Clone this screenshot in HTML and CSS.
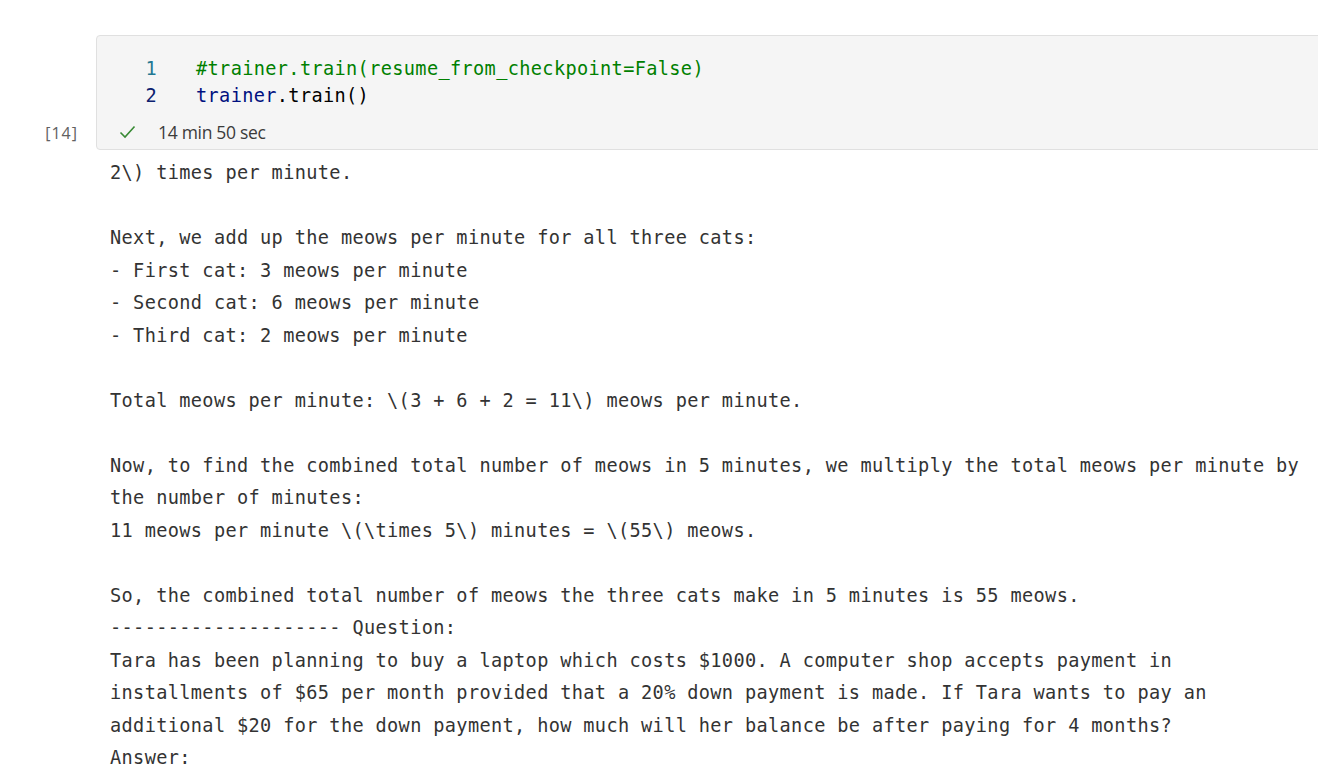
FILE: index.html
```html
<!DOCTYPE html>
<html>
<head>
<meta charset="utf-8">
<link rel="stylesheet" href="styles.css">
</head>
<body>
<div class="cell">
  <div class="gutter"><span class="exec-count">[14]</span></div>
  <div class="code-box">
    <div class="code">
      <div class="line"><span class="ln ln-inactive">1</span><span class="c-comment">#trainer.train(resume_from_checkpoint=False)</span></div>
      <div class="line"><span class="ln ln-active">2</span><span class="c-var">trainer</span><span class="c-plain">.train()</span></div>
    </div>
    <div class="status">
      <svg class="check" width="17" height="14" viewBox="0 0 17 14"><path d="M1.5 7.5 L6 12 L15.5 1.5" fill="none" stroke="#388a34" stroke-width="1.6"/></svg>
      <span class="duration">14 min 50 sec</span>
    </div>
  </div>
</div>
<pre class="output">2\) times per minute.

Next, we add up the meows per minute for all three cats:
- First cat: 3 meows per minute
- Second cat: 6 meows per minute
- Third cat: 2 meows per minute

Total meows per minute: \(3 + 6 + 2 = 11\) meows per minute.

Now, to find the combined total number of meows in 5 minutes, we multiply the total meows per minute by
the number of minutes:
11 meows per minute \(\times 5\) minutes = \(55\) meows.

So, the combined total number of meows the three cats make in 5 minutes is 55 meows.
-------------------- Question:
Tara has been planning to buy a laptop which costs $1000. A computer shop accepts payment in
installments of $65 per month provided that a 20% down payment is made. If Tara wants to pay an
additional $20 for the down payment, how much will her balance be after paying for 4 months?
Answer:</pre>
</body>
</html>
```
FILE: styles.css
```css
html, body {
  margin: 0;
  padding: 0;
  background: #ffffff;
  overflow: hidden;
}
.cell {
  display: flex;
  margin-top: 35px;
}
.gutter {
  width: 96px;
  flex: none;
  display: flex;
  align-items: flex-end;
  justify-content: flex-end;
  padding-right: 18px;
  box-sizing: border-box;
  padding-bottom: 6px;
}
.exec-count {
  font-family: "Open Sans", "Noto Sans", sans-serif;
  font-size: 16px;
  color: #616161;
  letter-spacing: 1px;
}
.code-box {
  flex: none;
  width: 1240px;
  height: 115px;
  box-sizing: border-box;
  background: #f5f5f5;
  border: 1px solid #e0e0e0;
  border-radius: 4px;
  display: flex;
  flex-direction: column;
}
.code {
  padding-top: 19px;
}
.line {
  display: flex;
  height: 27px;
  align-items: center;
  font-family: "DejaVu Sans Mono", monospace;
  font-size: 18.6px;
  letter-spacing: 0.35px;
  white-space: pre;
}
.ln {
  width: 60px;
  text-align: right;
  margin-right: 39px;
  flex: none;
}
.ln-inactive { color: #237893; }
.ln-active { color: #0b216f; }
.c-comment { color: #008000; }
.c-var { color: #001080; }
.c-plain { color: #000000; }
.status {
  display: flex;
  align-items: center;
  margin-top: auto;
  height: 32px;
  padding-left: 22px;
  padding-bottom: 1px;
}
.check {
  flex: none;
  margin-right: 22px;
}
.duration {
  font-family: "Open Sans", "Noto Sans", sans-serif;
  font-size: 17.5px;
  color: #3b3b3b;
  letter-spacing: -0.3px;
}
.output {
  margin: 7px 0 0 110px;
  font-family: "DejaVu Sans Mono", monospace;
  font-size: 18.6px;
  letter-spacing: 0.35px;
  line-height: 32.5px;
  color: #333333;
  white-space: pre;
}
```
